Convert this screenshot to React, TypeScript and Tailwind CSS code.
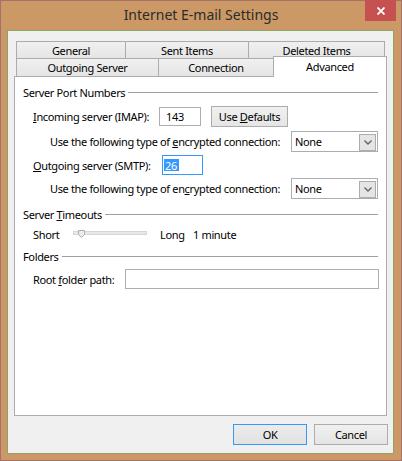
import React from "react";

function Tab({
  label,
  className,
}: {
  label: string;
  className?: string;
}) {
  return (
    <div
      className={
        "flex shrink-0 items-center justify-center border border-[#acacac] bg-gradient-to-b from-[#f0f0f0] to-[#e5e5e5] " +
        (className ?? "")
      }
    >
      {label}
    </div>
  );
}

function GroupHeader({ children }: { children: React.ReactNode }) {
  return (
    <div className="flex h-[16px] items-center">
      <span className="whitespace-nowrap">{children}</span>
      <div className="ml-[3px] h-px flex-1 bg-[#a0a0a0]" />
    </div>
  );
}

function Select() {
  return (
    <div className="relative flex h-[21px] w-[87px] shrink-0 items-center border border-[#abadb3] bg-white pl-[3px] text-black">
      None
      <div className="absolute top-[2px] right-[1px] flex h-[17px] w-[17px] items-center justify-center border border-[#acacac] bg-[#e5e5e5]">
        <svg width="8" height="5" viewBox="0 0 8 5">
          <path d="M0.5 0.5 L4 4 L7.5 0.5" fill="none" stroke="#606060" strokeWidth="1.3" />
        </svg>
      </div>
    </div>
  );
}

export default function App() {
  return (
    <div className="flex h-[461px] w-[402px] flex-col border border-[#a5726b] bg-[#cc9966] font-['Noto_Sans',sans-serif] text-[11px] leading-none tracking-[-0.35px] whitespace-nowrap text-black">
      {/* title bar */}
      <div className="relative flex h-[29px] items-center justify-center">
        <span className="pb-[1px] text-[14px] tracking-normal text-[#2b2b2b]">Internet E-mail Settings</span>
        <div className="absolute -top-px right-[5px] flex h-[21px] w-[31px] items-center justify-center bg-[#c75050]">
          <svg width="8" height="8" viewBox="0 0 8 8">
            <path d="M0.5 0.5 L7.5 7.5 M7.5 0.5 L0.5 7.5" stroke="#ffffff" strokeWidth="1.8" />
          </svg>
        </div>
      </div>

      {/* client area */}
      <div className="mr-[7px] mb-[6px] ml-[6px] flex h-[424px] flex-col border border-[#8fa26c] bg-[#f0f0f0]">
        <div className="ml-[6px] pt-[10px]">
          <div className="ml-[2px] flex h-[18px]">
            <Tab label="General" className="h-[18px] w-[110px]" />
            <Tab label="Sent Items" className="-ml-px h-[18px] w-[124px]" />
            <Tab label="Deleted Items" className="-ml-px h-[18px] w-[137px]" />
          </div>
          <div className="-mt-px ml-[2px] flex h-[18px] items-end">
            <Tab label="Outgoing Server" className="h-[18px] w-[143px] border-b-0" />
            <Tab label="Connection" className="-ml-px h-[18px] w-[116px] border-b-0" />
            <div className="relative z-10 -mb-px -ml-px flex h-[21px] w-[114px] shrink-0 items-start justify-center border border-b-0 border-[#acacac] bg-white pt-[4px]">
              Advanced
            </div>
          </div>

          {/* panel */}
          <div className="flex h-[340px] w-[373px] flex-col border border-[#acacac] bg-white px-[8px] pt-[7px]">
            <GroupHeader>Server Port Numbers</GroupHeader>

            <div className="mt-[6px] ml-[10px] flex h-[21px] items-center">
              <span className="w-[126px] shrink-0">
                <u>I</u>ncoming server (IMAP):
              </span>
              <div className="flex h-[19px] w-[42px] shrink-0 items-center border border-[#abadb3] pl-[6px]">143</div>
              <div className="ml-[10px] flex h-[21px] w-[77px] shrink-0 items-center justify-center border border-[#acacac] bg-gradient-to-b from-[#f0f0f0] to-[#e5e5e5]">
                Use&nbsp;<u>D</u>efaults
              </div>
            </div>

            <div className="mt-[4px] ml-[27px] flex h-[21px] items-center">
              <span className="w-[241px] shrink-0">
                Use the following type of <u>e</u>ncrypted connection:
              </span>
              <Select />
            </div>

            <div className="mt-[3px] ml-[10px] flex h-[20px] items-center">
              <span className="w-[129px] shrink-0">
                <u>O</u>utgoing server (SMTP):
              </span>
              <div className="flex h-[20px] w-[41px] shrink-0 items-center border border-[#3399ff] pl-[1px]">
                <span className="flex h-[12px] items-center bg-[#3399ff] pr-[2px] pl-[1px] text-white">26</span>
              </div>
            </div>

            <div className="mt-[3px] ml-[27px] flex h-[21px] items-center">
              <span className="w-[241px] shrink-0">
                Use the following type of en<u>c</u>rypted connection:
              </span>
              <Select />
            </div>

            <div className="mt-[7px]">
              <GroupHeader>
                Server <u>T</u>imeouts
              </GroupHeader>
            </div>

            <div className="mt-[4px] ml-[10px] flex h-[16px] items-center">
              <span className="w-[40px] shrink-0">Short</span>
              <div className="relative h-[16px] w-[74px] shrink-0">
                <div className="mt-[5px] h-[4px] w-[74px] border border-[#d6d6d6] bg-[#e7eaea]" />
                <svg className="absolute top-[4px] left-[5px]" width="7" height="8" viewBox="0 0 7 8">
                  <path d="M0.5 0.5 H6.5 V4.5 L3.5 7.5 L0.5 4.5 Z" fill="#ececec" stroke="#acacac" strokeWidth="1" />
                </svg>
              </div>
              <span className="ml-[13px] w-[33px] shrink-0">Long</span>
              <span>1 minute</span>
            </div>

            <div className="mt-[6px]">
              <GroupHeader>Folders</GroupHeader>
            </div>

            <div className="mt-[5px] ml-[10px] flex h-[20px] items-center">
              <span className="w-[92px] shrink-0">
                Root <u>f</u>older path:
              </span>
              <div className="h-[20px] w-[254px] shrink-0 border border-[#abadb3]" />
            </div>
          </div>
        </div>

        {/* dialog buttons */}
        <div className="mt-[8px] flex justify-end gap-[7px] pr-[5px]">
          <div className="flex h-[21px] w-[74px] items-center justify-center border border-[#3399ff] bg-gradient-to-b from-[#ececec] to-[#e1e1e1]">
            OK
          </div>
          <div className="flex h-[21px] w-[74px] items-center justify-center border border-[#acacac] bg-gradient-to-b from-[#f0f0f0] to-[#e5e5e5]">
            Cancel
          </div>
        </div>
      </div>
    </div>
  );
}
